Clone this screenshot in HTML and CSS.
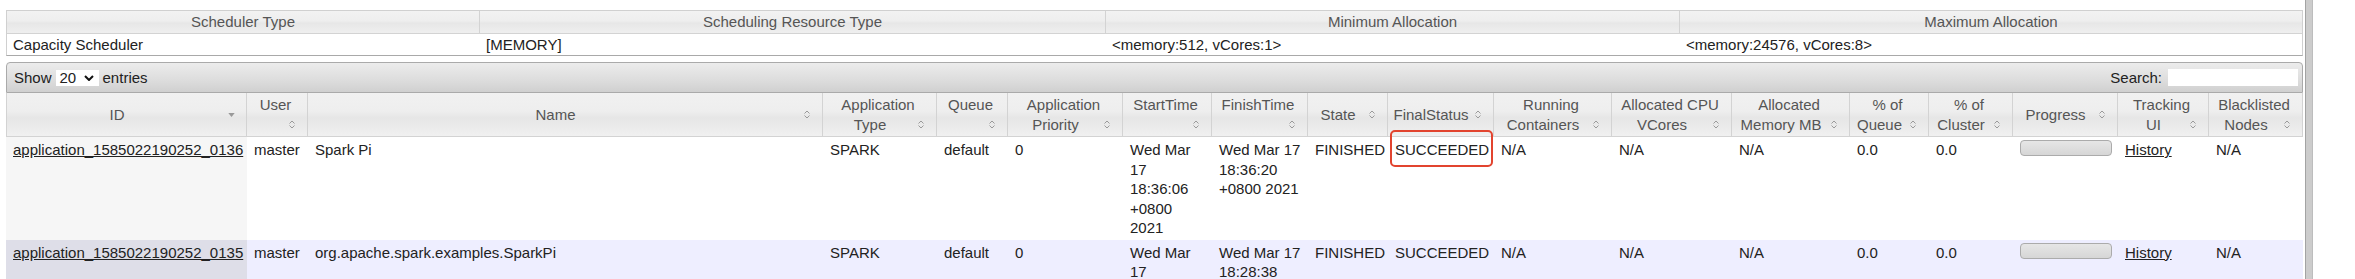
FILE: index.html
```html
<!DOCTYPE html>
<html lang="en">
<head>
<meta charset="utf-8">
<title>All Applications</title>
<link rel="stylesheet" href="styles.css">
</head>
<body>
<div class="page">
  <main class="main">
    <table class="sched">
      <colgroup>
        <col class="s1"><col class="s2"><col class="s3"><col class="s4">
      </colgroup>
      <thead>
        <tr><th>Scheduler Type</th><th>Scheduling Resource Type</th><th>Minimum Allocation</th><th>Maximum Allocation</th></tr>
      </thead>
      <tbody>
        <tr><td>Capacity Scheduler</td><td>[MEMORY]</td><td>&lt;memory:512, vCores:1&gt;</td><td>&lt;memory:24576, vCores:8&gt;</td></tr>
      </tbody>
    </table>

    <section class="apps">
      <div class="toolbar">
        <div class="length">Show <span class="sel"><span class="sel-val">20</span><svg class="chev" viewBox="0 0 10 6" width="10" height="6"><path d="M1 1L5 5L9 1"/></svg></span> entries</div>
        <label class="filter">Search: <input class="search" type="text"></label>
      </div>

      <table class="grid">
        <colgroup>
          <col class="w-id"><col class="w-user"><col class="w-name"><col class="w-type"><col class="w-queue"><col class="w-prio"><col class="w-start"><col class="w-finish"><col class="w-state"><col class="w-final"><col class="w-run"><col class="w-cpu"><col class="w-mem"><col class="w-pq"><col class="w-pc"><col class="w-prog"><col class="w-track"><col class="w-black">
        </colgroup>
        <thead>
          <tr>
            <th>ID<span class="sw"><svg class="tri" viewBox="0 0 8 5" width="7" height="4"><path d="M0 0H8L4 5Z"/></svg></span></th>
            <th>User<br><span class="sw"><svg class="si" viewBox="0 0 8 11" width="8" height="11"><path d="M1.5 4.5L4 2L6.5 4.5M1.5 6.5L4 9L6.5 6.5"/></svg></span></th>
            <th>Name<span class="sw"><svg class="si" viewBox="0 0 8 11" width="8" height="11"><path d="M1.5 4.5L4 2L6.5 4.5M1.5 6.5L4 9L6.5 6.5"/></svg></span></th>
            <th>Application<br>Type<span class="sw"><svg class="si" viewBox="0 0 8 11" width="8" height="11"><path d="M1.5 4.5L4 2L6.5 4.5M1.5 6.5L4 9L6.5 6.5"/></svg></span></th>
            <th>Queue<br><span class="sw"><svg class="si" viewBox="0 0 8 11" width="8" height="11"><path d="M1.5 4.5L4 2L6.5 4.5M1.5 6.5L4 9L6.5 6.5"/></svg></span></th>
            <th>Application<br>Priority<span class="sw"><svg class="si" viewBox="0 0 8 11" width="8" height="11"><path d="M1.5 4.5L4 2L6.5 4.5M1.5 6.5L4 9L6.5 6.5"/></svg></span></th>
            <th>StartTime<br><span class="sw"><svg class="si" viewBox="0 0 8 11" width="8" height="11"><path d="M1.5 4.5L4 2L6.5 4.5M1.5 6.5L4 9L6.5 6.5"/></svg></span></th>
            <th>FinishTime<br><span class="sw"><svg class="si" viewBox="0 0 8 11" width="8" height="11"><path d="M1.5 4.5L4 2L6.5 4.5M1.5 6.5L4 9L6.5 6.5"/></svg></span></th>
            <th>State<span class="sw"><svg class="si" viewBox="0 0 8 11" width="8" height="11"><path d="M1.5 4.5L4 2L6.5 4.5M1.5 6.5L4 9L6.5 6.5"/></svg></span></th>
            <th>FinalStatus<span class="sw"><svg class="si" viewBox="0 0 8 11" width="8" height="11"><path d="M1.5 4.5L4 2L6.5 4.5M1.5 6.5L4 9L6.5 6.5"/></svg></span></th>
            <th>Running<br>Containers<span class="sw"><svg class="si" viewBox="0 0 8 11" width="8" height="11"><path d="M1.5 4.5L4 2L6.5 4.5M1.5 6.5L4 9L6.5 6.5"/></svg></span></th>
            <th>Allocated CPU<br>VCores<span class="sw"><svg class="si" viewBox="0 0 8 11" width="8" height="11"><path d="M1.5 4.5L4 2L6.5 4.5M1.5 6.5L4 9L6.5 6.5"/></svg></span></th>
            <th>Allocated<br>Memory MB<span class="sw"><svg class="si" viewBox="0 0 8 11" width="8" height="11"><path d="M1.5 4.5L4 2L6.5 4.5M1.5 6.5L4 9L6.5 6.5"/></svg></span></th>
            <th>% of<br>Queue<span class="sw"><svg class="si" viewBox="0 0 8 11" width="8" height="11"><path d="M1.5 4.5L4 2L6.5 4.5M1.5 6.5L4 9L6.5 6.5"/></svg></span></th>
            <th>% of<br>Cluster<span class="sw"><svg class="si" viewBox="0 0 8 11" width="8" height="11"><path d="M1.5 4.5L4 2L6.5 4.5M1.5 6.5L4 9L6.5 6.5"/></svg></span></th>
            <th>Progress<span class="sw"><svg class="si" viewBox="0 0 8 11" width="8" height="11"><path d="M1.5 4.5L4 2L6.5 4.5M1.5 6.5L4 9L6.5 6.5"/></svg></span></th>
            <th>Tracking<br>UI<span class="sw"><svg class="si" viewBox="0 0 8 11" width="8" height="11"><path d="M1.5 4.5L4 2L6.5 4.5M1.5 6.5L4 9L6.5 6.5"/></svg></span></th>
            <th>Blacklisted<br>Nodes<span class="sw"><svg class="si" viewBox="0 0 8 11" width="8" height="11"><path d="M1.5 4.5L4 2L6.5 4.5M1.5 6.5L4 9L6.5 6.5"/></svg></span></th>
          </tr>
        </thead>
        <tbody>
          <tr class="odd">
            <td class="sorted"><a href="#">application_1585022190252_0136</a></td>
            <td>master</td>
            <td>Spark Pi</td>
            <td>SPARK</td>
            <td>default</td>
            <td>0</td>
            <td>Wed Mar 17 18:36:06 +0800 2021</td>
            <td>Wed Mar 17 18:36:20 +0800 2021</td>
            <td>FINISHED</td>
            <td>SUCCEEDED</td>
            <td>N/A</td>
            <td>N/A</td>
            <td>N/A</td>
            <td>0.0</td>
            <td>0.0</td>
            <td><div class="bar"></div></td>
            <td><a href="#">History</a></td>
            <td>N/A</td>
          </tr>
          <tr class="even">
            <td class="sorted"><a href="#">application_1585022190252_0135</a></td>
            <td>master</td>
            <td>org.apache.spark.examples.SparkPi</td>
            <td>SPARK</td>
            <td>default</td>
            <td>0</td>
            <td>Wed Mar 17 18:28:24 +0800 2021</td>
            <td>Wed Mar 17 18:28:38 +0800 2021</td>
            <td>FINISHED</td>
            <td>SUCCEEDED</td>
            <td>N/A</td>
            <td>N/A</td>
            <td>N/A</td>
            <td>0.0</td>
            <td>0.0</td>
            <td><div class="bar"></div></td>
            <td><a href="#">History</a></td>
            <td>N/A</td>
          </tr>
        </tbody>
      </table>
    </section>

    <div class="mark"></div>
  </main>
  <div class="vscroll"></div>
</div>
</body>
</html>
```

FILE: styles.css
```css
html, body {
  margin: 0;
  padding: 0;
  background: #ffffff;
}
body {
  font-family: "Liberation Sans", Arial, sans-serif;
  font-size: 15px;
  line-height: 19.5px;
  color: #222222;
  overflow: hidden;
}
.page {
  display: flex;
  height: 279px;
}
.main {
  position: relative;
  margin-left: 6px;
  padding-top: 10px;
  width: 2297px;
  flex: none;
}

/* scheduler summary */
.sched {
  width: 2297px;
  table-layout: fixed;
  border-collapse: separate;
  border-spacing: 0;
  border: 1px solid #d0d0d0;
  border-bottom-color: #a9a9a9;
}
.s1 { width: 473px; }
.s2 { width: 626px; }
.s3 { width: 574px; }
.s4 { width: 622px; }
.sched th {
  font-weight: normal;
  color: #555555;
  padding: 1px 6px 1px;
  text-align: center;
  background: linear-gradient(to bottom, #f2f2f2 0%, #eeeeee 45%, #e7e7e7 55%, #efefef 100%);
  border-right: 1px solid #d3d3d3;
  border-bottom: 1px solid #d3d3d3;
}
.sched th:last-child { border-right: 0; }
.sched td {
  padding: 1px 6px 1px;
  text-align: left;
  background: #ffffff;
}

/* applications */
.apps {
  margin-top: 6px;
}
.toolbar {
  display: flex;
  justify-content: space-between;
  align-items: center;
  box-sizing: border-box;
  height: 31px;
  padding: 0 4px 0 7px;
  border: 1px solid #aaaaaa;
  border-radius: 4px 4px 0 0;
  background: linear-gradient(to bottom, #ececec 0%, #dedede 55%, #d0d0d0 100%);
  color: #222222;
}
.length {
  display: flex;
  align-items: center;
}
.sel {
  display: inline-flex;
  align-items: center;
  justify-content: space-between;
  box-sizing: border-box;
  width: 43px;
  height: 16px;
  margin: 0 4px;
  padding: 0 5px 0 4px;
  background: #ffffff;
}
.chev {
  fill: none;
  stroke: #111111;
  stroke-width: 2;
}
.filter {
  display: flex;
  align-items: center;
}
.search {
  box-sizing: border-box;
  width: 130px;
  height: 17px;
  margin: 0 0 0 6px;
  padding: 0;
  border: 0;
  background: #ffffff;
  font: inherit;
  outline: none;
}

.grid {
  width: 2297px;
  table-layout: fixed;
  border-collapse: separate;
  border-spacing: 0;
}
.w-id { width: 241px; }
.w-user { width: 61px; }
.w-name { width: 515px; }
.w-type { width: 114px; }
.w-queue { width: 71px; }
.w-prio { width: 115px; }
.w-start { width: 89px; }
.w-finish { width: 96px; }
.w-state { width: 80px; }
.w-final { width: 106px; }
.w-run { width: 118px; }
.w-cpu { width: 120px; }
.w-mem { width: 118px; }
.w-pq { width: 79px; }
.w-pc { width: 84px; }
.w-prog { width: 105px; }
.w-track { width: 91px; }
.w-black { width: 94px; }

.grid th {
  font-weight: normal;
  color: #555555;
  text-align: center;
  vertical-align: middle;
  padding: 2px 7px 2px 4px;
  background: linear-gradient(to bottom, #f1f1f1 0%, #eeeeee 42%, #e6e6e6 58%, #f0f0f0 100%);
  border-right: 1px solid #d3d3d3;
  border-bottom: 1px solid #d3d3d3;
}
.grid th:first-child { border-left: 1px solid #d3d3d3; }
.sw {
  float: right;
  width: 16px;
  height: 19.5px;
  display: flex;
  align-items: center;
  justify-content: center;
}
.si {
  fill: none;
  stroke: #9a9a9a;
  stroke-width: 1;
}
.tri {
  fill: #999999;
}

.grid td {
  vertical-align: top;
  text-align: left;
  padding: 3px 6px 2px 7px;
  color: #222222;
}
.grid tr.odd td { background: #ffffff; }
.grid tr.odd td.sorted { background: #f6f6f6; }
.grid tr.even td { background: #eeeeff; }
.grid tr.even td.sorted { background: #dedee8; }
.grid a {
  color: #222222;
  text-decoration: underline;
}
.bar {
  box-sizing: border-box;
  width: 92px;
  height: 16px;
  border: 1px solid #ababab;
  border-radius: 4px;
  background: linear-gradient(to bottom, #e6e6e6 0%, #d6d6d6 100%);
}

/* annotation overlay */
.mark {
  position: absolute;
  left: 1384px;
  top: 130px;
  width: 103px;
  height: 37px;
  box-sizing: border-box;
  border: 2px solid #e2442f;
  border-radius: 5px;
}

.vscroll {
  flex: none;
  margin-left: 2px;
  width: 8px;
  height: 279px;
  box-sizing: border-box;
  border-left: 1px solid #a3a3a3;
  border-right: 1px solid #bdbdbd;
  background: #cccccc;
}
```
